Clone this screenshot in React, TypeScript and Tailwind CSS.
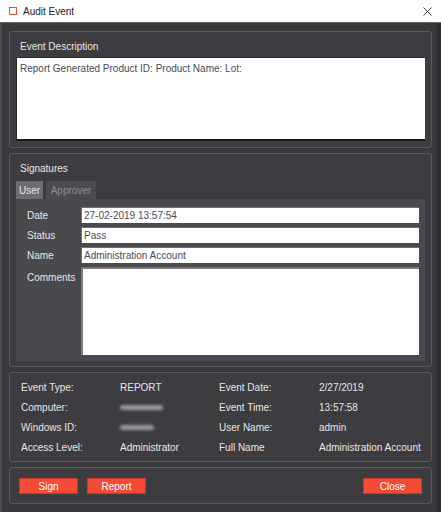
import React from "react";

const font = { fontFamily: '"Liberation Sans", Arial, sans-serif' };

function Field({ label, value }: { label: string; value: string }) {
  return (
    <div className="flex items-center h-[16px]">
      <div className="w-[65px] pl-[11px] text-[10px] text-[#e6e6e6]">{label}</div>
      <div className="flex-1 h-[16px] bg-white border-t border-l border-[#6f6f6f] flex items-center pl-[2px] text-[10px] text-[#4a4a58]">
        {value}
      </div>
    </div>
  );
}

function Blur({ w }: { w: number }) {
  return (
    <div className="flex items-center">
      <div className="h-[5px] rounded-full bg-[#9a999d] blur-[1.5px]" style={{ width: w }} />
    </div>
  );
}

export default function App() {
  const info: [string, React.ReactNode, string, string][] = [
    ["Event Type:", "REPORT", "Event Date:", "2/27/2019"],
    ["Computer:", <Blur w={43} />, "Event Time:", "13:57:58"],
    ["Windows ID:", <Blur w={34} />, "User Name:", "admin"],
    ["Access Level:", "Administrator", "Full Name", "Administration Account"],
  ];
  return (
    <div className="w-[441px] h-[512px] bg-[#39383c] flex flex-col border-l-2 border-[#4a494d] border-r-4 border-r-[#2e2d31]" style={font}>
      <div className="h-[23px] bg-white border-b border-[#6a6a6a] flex items-center shrink-0 -ml-[2px] -mr-[4px]">
        <div className="ml-[9px] w-[8px] h-[8px] border border-[#d9553a]" />
        <div className="ml-[6px] text-[10px] text-[#222]">Audit Event</div>
        <div className="ml-auto mr-[9px] text-[#555]">
          <svg width="9" height="9" viewBox="0 0 9 9">
            <path d="M0.5 0.5 L8.5 8.5 M8.5 0.5 L0.5 8.5" stroke="#444" strokeWidth="1" />
          </svg>
        </div>
      </div>
      <div className="flex flex-col gap-[5px] pl-[7px] pr-[5px] pt-[8px]">
        <div className="h-[117px] rounded-[3px] border border-[#5a595d] bg-[#3d3c40] flex flex-col px-[6px] pb-[6px]">
          <div className="h-[25px] pt-[9px] pl-[4px] text-[10px] text-[#e6e6e6] leading-[12px]">Event Description</div>
          <div className="flex-1 bg-white border-t border-l border-[#2a2a2a] border-b-2 border-b-[#1a1a1a] px-[3px] pt-[5px] text-[10px] text-[#4a4a58] leading-[12px]">
            Report Generated Product ID: Product Name: Lot:
          </div>
        </div>
        <div className="h-[214px] rounded-[3px] border border-[#5a595d] bg-[#3d3c40] flex flex-col px-[6px] pb-[5px]">
          <div className="h-[27px] pt-[9px] pl-[4px] text-[10px] text-[#e6e6e6] leading-[12px]">Signatures</div>
          <div className="flex gap-[3px] h-[18px]">
            <div className="w-[27px] bg-[#6d6c70] text-[10px] text-[#e8e8e8] flex items-center justify-center">User</div>
            <div className="w-[50px] bg-[#4c4b4f] text-[10px] text-[#8e8d91] flex items-center justify-center">Approver</div>
          </div>
          <div className="flex-1 bg-[#4a494d] flex flex-col gap-[4px] pt-[8px] pr-[6px] pb-[6px]">
            <Field label="Date" value="27-02-2019 13:57:54" />
            <Field label="Status" value="Pass" />
            <Field label="Name" value="Administration Account" />
            <div className="flex flex-1">
              <div className="w-[65px] pl-[11px] pt-[3px] text-[10px] text-[#e6e6e6]">Comments</div>
              <div className="flex-1 bg-white border-t-2 border-l-2 border-[#7a797d]" />
            </div>
          </div>
        </div>
        <div className="h-[90px] rounded-[3px] border border-[#5a595d] bg-[#3d3c40] flex flex-col py-[4px] pl-[11px]">
          {info.map((r, i) => (
            <div key={i} className="h-[20px] flex items-center text-[10px] text-[#e6e6e6]">
              <div className="w-[99px]">{r[0]}</div>
              <div className="w-[99px] flex">{r[1]}</div>
              <div className="w-[100px]">{r[2]}</div>
              <div>{r[3]}</div>
            </div>
          ))}
        </div>
        <div className="h-[37px] rounded-[3px] border border-[#5a595d] bg-[#3d3c40] flex items-center pl-[9px] pr-[9px]">
          <button className="w-[59px] h-[16px] bg-[#f54a33] border border-[#c63a28] text-[10px] text-white">Sign</button>
          <button className="ml-[9px] w-[59px] h-[16px] bg-[#f54a33] border border-[#c63a28] text-[10px] text-white">Report</button>
          <button className="ml-auto w-[59px] h-[16px] bg-[#f54a33] border border-[#c63a28] text-[10px] text-white">Close</button>
        </div>
      </div>
    </div>
  );
}
